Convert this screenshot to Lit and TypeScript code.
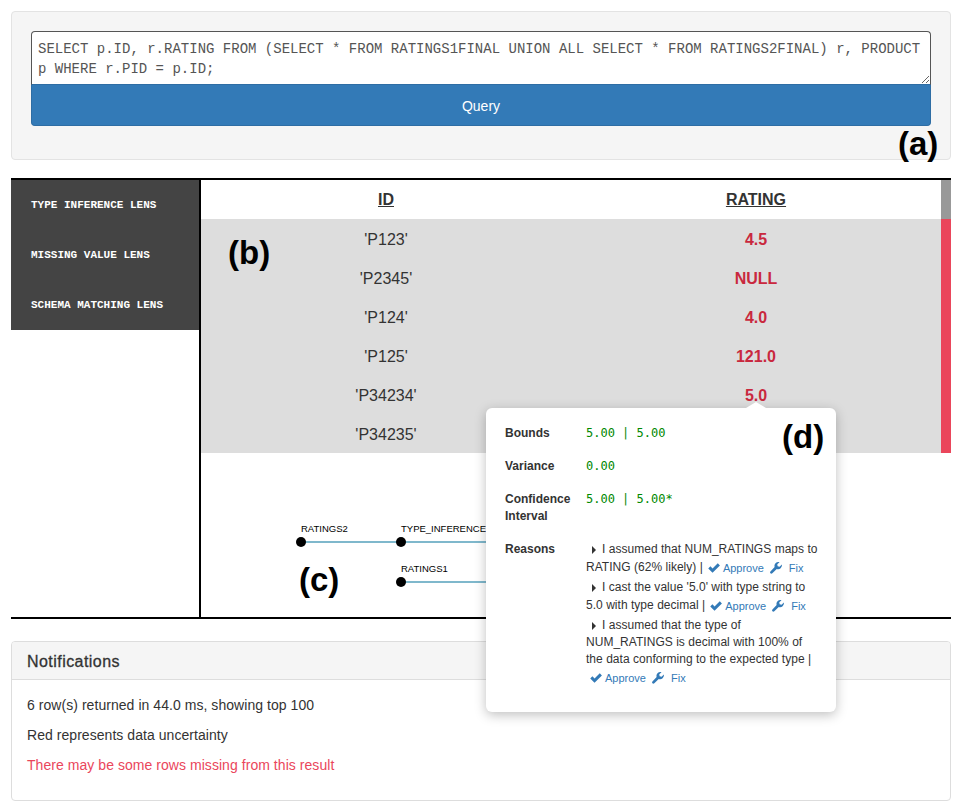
import { LitElement, html, css, svg } from "lit";
import { customElement } from "lit/decorators.js";

const rows = [
  ["'P123'", "4.5"],
  ["'P2345'", "NULL"],
  ["'P124'", "4.0"],
  ["'P125'", "121.0"],
  ["'P34234'", "5.0"],
  ["'P34235'", "5.0"],
];

const reasons = [
  { first: "I assumed that NUM_RATINGS maps to", rest: [], last: "RATING (62% likely) |" },
  { first: "I cast the value '5.0' with type string to", rest: [], last: "5.0 with type decimal |" },
  {
    first: "I assumed that the type of",
    rest: ["NUM_RATINGS is decimal with 100% of", "the data conforming to the expected type |"],
    last: "",
  },
];

const check = html`<svg class="ico" viewBox="0 0 14 14"><path d="M0.3 7.6 L2.8 5.1 L5.3 7.6 L11.4 1.5 L13.9 4 L5.3 12.6Z" fill="#337ab7"/></svg>`;
const wrench = html`<svg class="ico" viewBox="0 0 14 14"><path d="M13.8 2.8 L11.2 5.4 L8.9 4.9 L8.5 2.6 L11.1 0.2 C9.4 -0.3 7.6 0.2 6.4 1.4 C5.2 2.6 4.9 4.3 5.4 5.8 L0.5 11 C-0.1 11.6 -0.1 12.6 0.5 13.2 C1.1 13.8 2.1 13.8 2.7 13.2 L7.9 8.2 C9.4 8.8 11.2 8.5 12.4 7.3 C13.7 6 14.2 4.4 13.8 2.8Z" fill="#337ab7"/></svg>`;

const actions = html`<div class="acts">${check}<a class="approve">Approve</a>${wrench}<a class="fix">Fix</a></div>`;

@customElement("app-root")
export class AppRoot extends LitElement {
  static styles = css`
    :host {
      display: block;
      position: relative;
      width: 971px;
      height: 806px;
      box-sizing: border-box;
      padding: 11px 20px 0 11px;
      font-family: "Liberation Sans", Arial, sans-serif;
      font-size: 14px;
      color: #333;
      background: #fff;
      overflow: hidden;
    }
    .well {
      height: 149px;
      box-sizing: border-box;
      padding: 19px;
      background: #f5f5f5;
      border: 1px solid #e3e3e3;
      border-radius: 4px;
    }
    textarea {
      display: block;
      width: 100%;
      height: 54px;
      box-sizing: border-box;
      margin: 0;
      padding: 7px 6px 5px;
      font-family: "Liberation Mono", monospace;
      font-size: 14px;
      line-height: 20px;
      color: #555;
      background: #fff;
      border: 1px solid #555;
      border-bottom-color: #2e6da4;
      border-radius: 4px 4px 0 0;
      outline: none;
      resize: vertical;
    }
    .go {
      display: block;
      width: 100%;
      height: 41px;
      box-sizing: border-box;
      padding: 2px 0 0;
      font-family: inherit;
      font-size: 14px;
      color: #fff;
      background: #337ab7;
      border: 1px solid #2e6da4;
      border-top: 0;
      border-radius: 0 0 4px 4px;
    }
    .results {
      display: flex;
      height: 441px;
      box-sizing: border-box;
      margin-top: 18px;
      border-top: 2px solid #000;
      border-bottom: 2px solid #000;
    }
    .lenses {
      width: 188px;
      height: 150px;
      flex: none;
      background: #444;
    }
    .lens {
      display: flex;
      align-items: center;
      height: 50px;
      box-sizing: border-box;
      padding-left: 20px;
      font-family: "Liberation Mono", monospace;
      font-size: 11px;
      font-weight: bold;
      color: #fff;
    }
    .main {
      flex: 1;
      min-width: 0;
      border-left: 2px solid #000;
      display: flex;
      flex-direction: column;
    }
    .table {
      display: grid;
      grid-template-columns: 370px 370px 10px;
      grid-template-rows: repeat(7, 39px);
      font-size: 16px;
    }
    .cell {
      display: flex;
      align-items: center;
      justify-content: center;
      padding-top: 2px;
      box-sizing: border-box;
      background: #ddd;
    }
    .cell.head {
      padding-top: 0;
      background: #fff;
      font-weight: bold;
      text-decoration: underline;
    }
    .bad {
      font-weight: bold;
      color: #c9283e;
    }
    .bar-top {
      background: #999;
    }
    .bar-red {
      grid-row: 2 / span 6;
      grid-column: 3;
      background: #ea465b;
    }
    .dag {
      display: block;
      flex: 1;
      min-height: 0;
      width: 100%;
    }
    .dag text {
      font-family: "Liberation Sans", Arial, sans-serif;
      font-size: 9.5px;
      fill: #000;
    }
    .panel {
      height: 160px;
      box-sizing: border-box;
      margin-top: 22px;
      border: 1px solid #ddd;
      border-radius: 4px;
    }
    .panel-head {
      height: 38px;
      box-sizing: border-box;
      padding: 2px 15px 0;
      display: flex;
      align-items: center;
      font-size: 16px;
      letter-spacing: 0.45px;
      -webkit-text-stroke: 0.3px #333;
      background: #f5f5f5;
      border-bottom: 1px solid #ddd;
      border-radius: 3px 3px 0 0;
    }
    .panel-body {
      padding: 15px;
      display: flex;
      flex-direction: column;
      gap: 10px;
      line-height: 20px;
      letter-spacing: 0.05px;
    }
    .warn {
      color: #ea465b;
    }
    .pop {
      position: absolute;
      left: 486px;
      top: 408px;
      width: 350px;
      height: 304px;
      box-sizing: border-box;
      padding: 17px 16px 0 19px;
      background: #fff;
      border-radius: 6px;
      box-shadow: 0 3px 12px rgba(0, 0, 0, 0.25);
      font-size: 12px;
      line-height: 17px;
      display: grid;
      grid-template-columns: 81px 1fr;
      grid-auto-rows: min-content;
      row-gap: 16px;
    }
    .pop::before {
      content: "";
      position: absolute;
      left: 260px;
      top: -6px;
      width: 0;
      height: 0;
      border-left: 10px solid transparent;
      border-right: 10px solid transparent;
      border-bottom: 6px solid #fff;
    }
    .lab {
      font-weight: bold;
      color: #333;
    }
    .val {
      font-family: "DejaVu Sans Mono", monospace;
      font-size: 12px;
      color: #080;
    }
    .reasons {
      color: #333;
      letter-spacing: 0.03px;
    }
    .reason {
      margin-bottom: 3px;
    }
    .line {
      display: flex;
      align-items: center;
      height: 17px;
      white-space: nowrap;
    }
    .line.has-acts {
      padding-top: 1px;
    }
    .line.only-acts {
      padding-left: 4px;
    }
    .tri {
      flex: none;
      width: 0;
      height: 0;
      margin: 0 6px;
      border-left: 4px solid #333;
      border-top: 4px solid transparent;
      border-bottom: 4px solid transparent;
    }
    .acts {
      display: flex;
      align-items: center;
      margin-left: 5px;
      font-size: 11px;
      color: #337ab7;
      letter-spacing: 0;
    }
    .line.only-acts .acts {
      margin-left: 0;
    }
    .approve {
      margin: 1px 6px 0 3px;
    }
    .fix {
      margin: 1px 0 0 7px;
    }
    .ico {
      width: 12px;
      height: 12px;
      flex: none;
    }
    .tag {
      position: absolute;
      font-size: 33px;
      line-height: 33px;
      font-weight: bold;
      color: #000;
    }
    .ta { left: 898px; top: 127px; }
    .tb { left: 228px; top: 236px; }
    .tc { left: 299px; top: 563px; }
    .td { left: 782px; top: 420px; }
  `;

  render() {
    return html`
      <div class="well">
        <textarea spellcheck="false">SELECT p.ID, r.RATING FROM (SELECT * FROM RATINGS1FINAL UNION ALL SELECT * FROM RATINGS2FINAL) r, PRODUCT p WHERE r.PID = p.ID;</textarea>
        <button class="go">Query</button>
      </div>

      <div class="results">
        <div class="lenses">
          <div class="lens">TYPE INFERENCE LENS</div>
          <div class="lens">MISSING VALUE LENS</div>
          <div class="lens">SCHEMA MATCHING LENS</div>
        </div>
        <div class="main">
          <div class="table">
            <div class="cell head">ID</div>
            <div class="cell head">RATING</div>
            <div class="bar-top"></div>
            <div class="bar-red"></div>
            ${rows.map(
              ([id, rating]) => html`
                <div class="cell">${id}</div>
                <div class="cell bad">${rating}</div>
              `
            )}
          </div>
          <svg class="dag" viewBox="0 0 750 164" preserveAspectRatio="xMinYMin">
            ${svg`
              <line x1="100" y1="89" x2="300" y2="89" stroke="#7fb8cc" stroke-width="2"/>
              <line x1="200" y1="129" x2="300" y2="129" stroke="#7fb8cc" stroke-width="2"/>
              <circle cx="100" cy="89" r="5" fill="#000"/>
              <circle cx="200" cy="89" r="5" fill="#000"/>
              <circle cx="200" cy="129" r="5" fill="#000"/>
              <text x="100" y="79">RATINGS2</text>
              <text x="200" y="79">TYPE_INFERENCE</text>
              <text x="200" y="119">RATINGS1</text>
            `}
          </svg>
        </div>
      </div>

      <div class="panel">
        <div class="panel-head">Notifications</div>
        <div class="panel-body">
          <div>6 row(s) returned in 44.0 ms, showing top 100</div>
          <div>Red represents data uncertainty</div>
          <div class="warn">There may be some rows missing from this result</div>
        </div>
      </div>

      <div class="pop">
        <div class="lab">Bounds</div>
        <div class="val">5.00 | 5.00</div>
        <div class="lab">Variance</div>
        <div class="val">0.00</div>
        <div class="lab">Confidence<br />Interval</div>
        <div class="val">5.00 | 5.00*</div>
        <div class="lab">Reasons</div>
        <div class="reasons">
          ${reasons.map(
            (r) => html`
              <div class="reason">
                <div class="line"><span class="tri"></span><span>${r.first}</span></div>
                ${r.rest.map((t) => html`<div class="line"><span>${t}</span></div>`)}
                ${r.last
                  ? html`<div class="line has-acts"><span>${r.last}</span>${actions}</div>`
                  : html`<div class="line has-acts only-acts">${actions}</div>`}
              </div>
            `
          )}
        </div>
      </div>

      <div class="tag ta">(a)</div>
      <div class="tag tb">(b)</div>
      <div class="tag tc">(c)</div>
      <div class="tag td">(d)</div>
    `;
  }
}
